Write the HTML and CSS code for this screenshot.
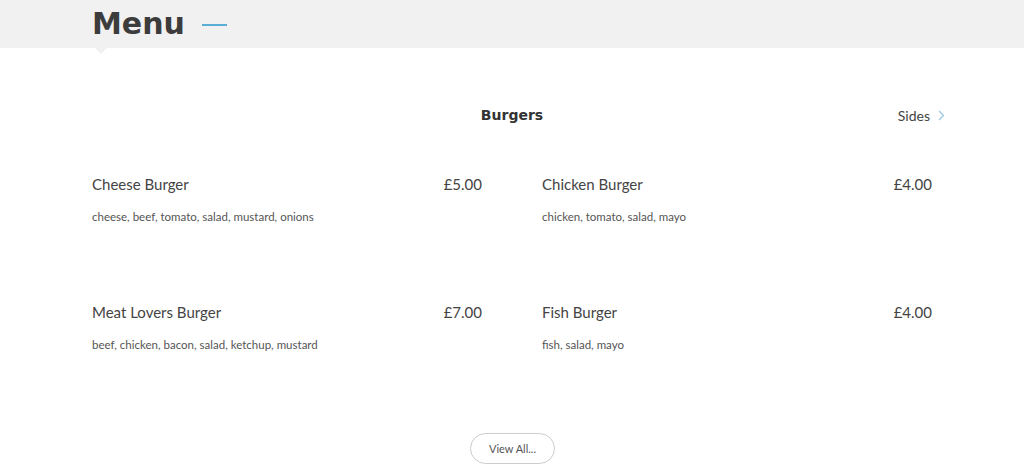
FILE: index.html
```html
<!DOCTYPE html>
<html lang="en">
<head>
<meta charset="utf-8">
<title>Menu</title>
<link rel="stylesheet" href="styles.css">
</head>
<body>
<header class="band">
  <div class="wrap band-inner">
    <h1 class="title">Menu</h1>
    <span class="dash"></span>
    <span class="notch"></span>
  </div>
</header>
<main class="wrap">
  <nav class="tabs">
    <span class="tab-spacer"></span>
    <h2 class="tab-current">Burgers</h2>
    <a class="tab-next" href="#">Sides <svg width="7" height="11" viewBox="0 0 7 11"><path d="M1 1 L5.5 5.5 L1 10" fill="none" stroke="#9cc9e0" stroke-width="1.3"/></svg></a>
  </nav>
  <section class="grid">
    <div class="item">
      <div class="item-head"><span class="name">Cheese Burger</span><span class="price">£5.00</span></div>
      <p class="desc">cheese, beef, tomato, salad, mustard, onions</p>
    </div>
    <div class="item">
      <div class="item-head"><span class="name">Chicken Burger</span><span class="price">£4.00</span></div>
      <p class="desc">chicken, tomato, salad, mayo</p>
    </div>
    <div class="item">
      <div class="item-head"><span class="name">Meat Lovers Burger</span><span class="price">£7.00</span></div>
      <p class="desc">beef, chicken, bacon, salad, ketchup, mustard</p>
    </div>
    <div class="item">
      <div class="item-head"><span class="name">Fish Burger</span><span class="price">£4.00</span></div>
      <p class="desc">fish, salad, mayo</p>
    </div>
  </section>
  <div class="more"><a class="btn" href="#">View All...</a></div>
</main>
</body>
</html>
```

FILE: styles.css
```css
* { box-sizing: border-box; }
html, body { margin: 0; padding: 0; background: #fff; }
body { font-family: Lato, "Open Sans", sans-serif; color: #444; overflow: hidden; }
.wrap { width: 840px; margin: 0 auto; }
.band { background: #f1f1f1; height: 48px; }
.band-inner { position: relative; display: flex; align-items: center; height: 48px; }
.title {
  margin: 0;
  font-family: "DejaVu Sans", sans-serif;
  font-weight: 700;
  font-size: 30px;
  color: #3c3c3c;
  letter-spacing: 0;
  line-height: 1;
}
.dash { display: block; width: 25px; height: 2px; background: #5aaed6; margin-left: 17px; margin-top: 2px; }
.notch {
  position: absolute; left: 3px; top: 48px;
  width: 0; height: 0;
  border-left: 6px solid transparent; border-right: 6px solid transparent;
  border-top: 6px solid #f1f1f1;
}
.tabs { display: grid; grid-template-columns: 1fr auto 1fr; align-items: center; margin-top: 56px; height: 22px; }
.tab-current { margin: 0; font-family: "DejaVu Sans", sans-serif; font-weight: 700; font-size: 14px; color: #333; }
.tab-next { justify-self: end; margin-right: -13px; font-size: 14px; color: #444; text-decoration: none; display: flex; align-items: center; gap: 8px; }
.grid { display: grid; grid-template-columns: 390px 390px; column-gap: 60px; margin-top: 49px; }
.item { height: 128px; }
.item-head { display: flex; justify-content: space-between; align-items: baseline; }
.name, .price { font-size: 15px; color: #444; }
.desc { margin: 17px 0 0; font-size: 11.5px; color: #555; }
.more { display: flex; justify-content: center; margin-top: 2px; }
.btn {
  display: inline-flex; align-items: center; justify-content: center;
  width: 85px; height: 31px; border: 1px solid #ccc; border-radius: 16px;
  font-size: 11px; color: #555; text-decoration: none; margin-left: 1px;
}
```
